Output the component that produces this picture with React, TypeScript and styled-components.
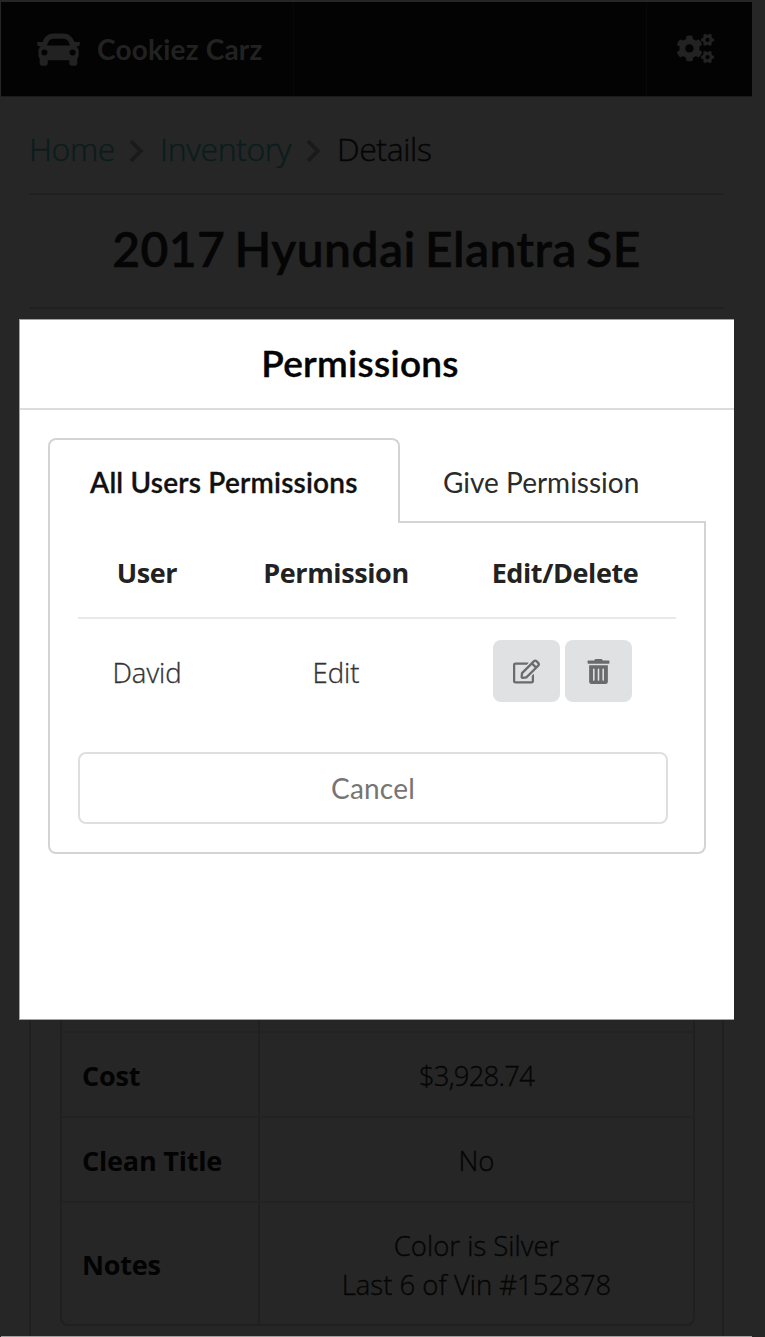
import React from "react";
import styled, { createGlobalStyle } from "styled-components";
import { FaCogs, FaRegEdit, FaTrashAlt } from "react-icons/fa";

const lato = `Lato, "Liberation Sans", sans-serif`;
const body = `"Open Sans", "Noto Sans", sans-serif`;

const GlobalStyle = createGlobalStyle`
  *, *::before, *::after { box-sizing: border-box; }
  body { margin: 0; background: #262626; }
  button { font: inherit; margin: 0; padding: 0; }
`;

const Page = styled.div`
  position: relative;
  width: 765px;
  height: 1337px;
  overflow: hidden;
  padding: 2px 13px 0 1px;
  background: #262626;
  font-family: ${body};
  display: flex;
  flex-direction: column;
`;

const NavBar = styled.nav`
  display: flex;
  justify-content: space-between;
  height: 95px;
  flex: none;
  background: #030303;
  border-bottom: 1px solid #1b1b1b;
  color: #222;
`;

const Brand = styled.div`
  display: flex;
  align-items: center;
  gap: 17px;
  width: 293px;
  padding-left: 36px;
  border-right: 1px solid #080808;
  font: 700 28px/1 ${lato};
  letter-spacing: 0.2px;
`;

const NavAction = styled.div`
  display: flex;
  align-items: center;
  width: 106px;
  padding: 0 0 1px 30px;
  border-left: 1px solid #080808;
`;

const Content = styled.main`
  flex: 1;
  display: flex;
  flex-direction: column;
  padding: 0 28px;
  border-bottom: 1px solid #a0a0a0;
`;

const Breadcrumb = styled.div`
  display: flex;
  align-items: center;
  height: 95px;
  padding-top: 8px;
  font-size: 32px;
  font-weight: 300;
  -webkit-text-stroke: 0.4px currentColor;
  letter-spacing: -0.4px;
  color: #050505;
`;

const Crumb = styled.a<{ $width: number }>`
  color: #0a1d1c;
  width: ${(p) => p.$width}px;
  white-space: nowrap;
`;

const Current = styled.span`
  white-space: nowrap;
`;

const Separator = styled.span`
  display: flex;
  width: 46px;
  padding: 5px 0 0 15px;
  color: #1a1a1a;
`;

const Title = styled.h1`
  margin: 1px 0 0;
  height: 116px;
  border: solid #202020;
  border-width: 2px 0;
  font: 600 48px/107px ${lato};
  -webkit-text-stroke: 0.5px currentColor;
  letter-spacing: 0.4px;
  word-spacing: -3px;
  text-align: center;
  color: #050505;
`;

const Panel = styled.section`
  flex: 1;
  margin-top: 30px;
  padding: 0 27px 10px 29px;
  border: solid #202020;
  border-width: 0 2px;
  display: flex;
  flex-direction: column;
  justify-content: flex-end;
`;

const DetailTable = styled.div`
  border: 2px solid #202020;
  border-radius: 8px;
`;

const DetailRow = styled.div<{ $height: number }>`
  display: flex;
  height: ${(p) => p.$height}px;
  border-bottom: 2px solid #222;
  &:last-child { border-bottom: 0; }
`;

const DetailName = styled.div`
  display: flex;
  align-items: center;
  width: 198px;
  padding: 2px 0 0 20px;
  border-right: 2px solid #202020;
  font-size: 27px;
  font-weight: 700;
  letter-spacing: -0.2px;
  color: #030303;
`;

const DetailValue = styled.div<{ $numeric?: boolean }>`
  flex: 1;
  display: flex;
  flex-direction: column;
  align-items: center;
  justify-content: center;
  padding-top: 2px;
  font-size: 27.5px;
  line-height: 39px;
  font-weight: 300;
  -webkit-text-stroke: 0.35px currentColor;
  letter-spacing: ${(p) => (p.$numeric ? "-0.8px" : "0")};
  color: #050505;
`;

const Modal = styled.div`
  position: absolute;
  left: 19px;
  top: 319px;
  width: 715px;
  height: 701px;
  background: #fff;
  border: solid #a3a3a3;
  border-width: 1px 0 1px 1px;
`;

const ModalTitle = styled.h2`
  margin: 0;
  height: 90px;
  padding-right: 34px;
  border-bottom: 2px solid #dcdcdd;
  font: 600 37px/86px ${lato};
  -webkit-text-stroke: 0.4px currentColor;
  letter-spacing: 0.3px;
  text-align: center;
  color: #040404;
`;

const ModalBody = styled.div`
  padding: 28px 28px 0;
`;

const TabList = styled.div`
  display: flex;
  height: 85px;
  font: 400 28px/85px ${lato};
`;

const Tab = styled.div<{ $active?: boolean }>`
  flex: ${(p) => (p.$active ? "0 0 352px" : "1")};
  border: 2px solid #d4d4d5;
  border-width: ${(p) => (p.$active ? "2px 2px 0" : "0 0 2px")};
  border-radius: ${(p) => (p.$active ? "8px 8px 0 0" : "0")};
  padding-left: ${(p) => (p.$active ? "40px" : "43px")};
  line-height: ${(p) => (p.$active ? "85px" : "89px")};
  font-weight: ${(p) => (p.$active ? 600 : 400)};
  -webkit-text-stroke: ${(p) => (p.$active ? "0.3px currentColor" : "0")};
  letter-spacing: ${(p) => (p.$active ? "0.2px" : "0")};
  color: ${(p) => (p.$active ? "#111" : "#2b2b2b")};
  white-space: nowrap;
`;

const TabPanel = styled.div`
  height: 331px;
  padding: 0 28px;
  border: 2px solid #d4d4d5;
  border-top: 0;
  border-radius: 0 0 8px 8px;
`;

const Table = styled.div`
  width: 598px;
`;

const Row = styled.div<{ $head?: boolean }>`
  display: grid;
  grid-template-columns: 138px 240px 218px;
  align-items: center;
  text-align: center;
  height: ${(p) => (p.$head ? 96 : 107)}px;
  padding-top: ${(p) => (p.$head ? "4px" : "0")};
  border-bottom: ${(p) => (p.$head ? "2px solid #e9e9ea" : "0")};
  font-size: ${(p) => (p.$head ? "27px" : "27.5px")};
  font-weight: ${(p) => (p.$head ? 700 : 300)};
  -webkit-text-stroke: ${(p) => (p.$head ? "0" : "0.35px currentColor")};
  letter-spacing: ${(p) => (p.$head ? "-0.4px" : "0")};
  color: ${(p) => (p.$head ? "#222" : "#333")};
`;

const Actions = styled.div`
  display: flex;
  justify-content: center;
  gap: 5px;
  padding: 0 6px 3px 0;
`;

const IconButton = styled.button`
  display: flex;
  align-items: center;
  justify-content: center;
  width: 67px;
  height: 62px;
  border: 0;
  border-radius: 8px;
  background: #e0e1e2;
  color: #6b6b6b;
`;

const CancelButton = styled.button`
  display: block;
  width: 590px;
  height: 72px;
  margin-top: 26px;
  border: 2px solid #dfdfe0;
  border-radius: 8px;
  background: #fff;
  color: #757575;
  font: 400 28px/1 ${lato};
  letter-spacing: 0.2px;
`;

const CarIcon = () => (
  <svg width="43" height="43" viewBox="0 0 512 512" fill="currentColor" fillRule="evenodd">
    <path d="M500 168h-54.800l-7.900-20.900C418.800 97.600 371 64 317.500 64h-123C141 64 93.200 97.600 74.700 147.100L66.800 168H12c-8.200 0-14 8-11.400 15.800l8 24A12 12 0 0 0 20 216h28.800C29.200 227.100 16 248 16 272v48c0 16.200 6 31 16 42.300V424c0 13.300 10.700 24 24 24h48c13.300 0 24-10.700 24-24v-40h256v40c0 13.300 10.700 24 24 24h48c13.300 0 24-10.700 24-24v-61.700c10-11.300 16-26.100 16-42.300v-48c0-24-13.200-44.900-32.800-56H492a12 12 0 0 0 11.400-8.200l8-24C514 176 508.200 168 500 168zM134.200 169.500C143.600 144.600 167.400 128 194.500 128h123c27 0 51 16.600 60.300 41.500L394.800 208H117.200zM88 328a36 36 0 1 1 36-36c0 20-16 36-36 36zm336 0a36 36 0 1 1 0-72 36 36 0 0 1 0 72z" />
  </svg>
);

const Chevron = () => (
  <svg width="15" height="24" viewBox="0 0 15 24" fill="none" stroke="currentColor" strokeWidth="3.8">
    <path d="M2 2.200L11.800 12L2 21.800" />
  </svg>
);

const details = [
  { name: "Cost", value: ["$3,928.74"], height: 85, numeric: true },
  { name: "Clean Title", value: ["No"], height: 85 },
  { name: "Notes", value: ["Color is Silver", "Last 6 of Vin #152878"], height: 121 },
];

export default function App() {
  return (
    <>
      <GlobalStyle />
      <Page>
        <NavBar>
          <Brand>
            <CarIcon />
            Cookiez Carz
          </Brand>
          <NavAction>
            <FaCogs size={37} />
          </NavAction>
        </NavBar>
        <Content>
          <Breadcrumb>
            <Crumb $width={85}>Home</Crumb>
            <Separator><Chevron /></Separator>
            <Crumb $width={131}>Inventory</Crumb>
            <Separator><Chevron /></Separator>
            <Current>Details</Current>
          </Breadcrumb>
          <Title>2017 Hyundai Elantra SE</Title>
          <Panel>
            <DetailTable>
              <DetailRow $height={85}>
                <DetailName />
                <DetailValue />
              </DetailRow>
              {details.map((d) => (
                <DetailRow key={d.name} $height={d.height}>
                  <DetailName>{d.name}</DetailName>
                  <DetailValue $numeric={d.numeric}>
                    {d.value.map((line) => <span key={line}>{line}</span>)}
                  </DetailValue>
                </DetailRow>
              ))}
            </DetailTable>
          </Panel>
        </Content>
        <Modal>
          <ModalTitle>Permissions</ModalTitle>
          <ModalBody>
            <TabList>
              <Tab $active>All Users Permissions</Tab>
              <Tab>Give Permission</Tab>
            </TabList>
            <TabPanel>
              <Table>
                <Row $head>
                  <span>User</span>
                  <span>Permission</span>
                  <span>Edit/Delete</span>
                </Row>
                <Row>
                  <span>David</span>
                  <span>Edit</span>
                  <Actions>
                    <IconButton aria-label="Edit"><FaRegEdit size={27} /></IconButton>
                    <IconButton aria-label="Delete"><FaTrashAlt size={25} /></IconButton>
                  </Actions>
                </Row>
              </Table>
              <CancelButton>Cancel</CancelButton>
            </TabPanel>
          </ModalBody>
        </Modal>
      </Page>
    </>
  );
}
